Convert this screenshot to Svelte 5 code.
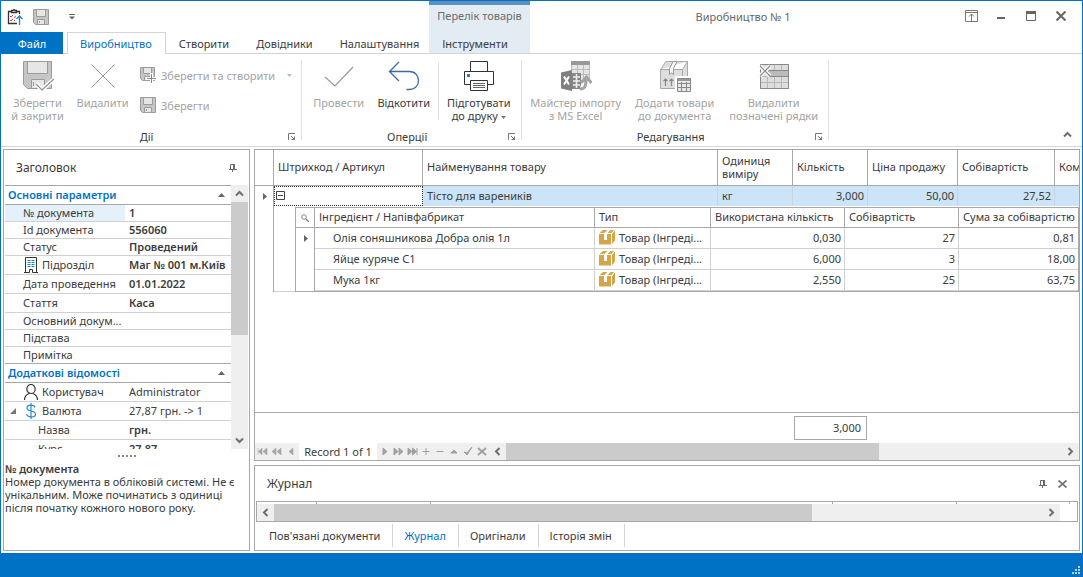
<script>
  const tabs = ['Виробництво', 'Створити', 'Довідники', 'Налаштування'];
  const mainProps = [
    { name: '№ документа', value: '1', selected: true },
    { name: 'Id документа', value: '556060' },
    { name: 'Статус', value: 'Проведений' },
    { name: 'Підрозділ', value: 'Маг № 001 м.Київ', icon: 'building', tall: true },
    { name: 'Дата проведення', value: '01.01.2022', tall: true },
    { name: 'Стаття', value: 'Каса', tall: true },
    { name: 'Основний докум...', value: '' },
    { name: 'Підстава', value: '' },
    { name: 'Примітка', value: '', last: true }
  ];
  const extraProps = [
    { name: 'Користувач', value: 'Administrator', icon: 'user', tall: true, plain: true },
    { name: 'Валюта', value: '27,87 грн. -> 1', icon: 'dollar', tall: true, plain: true, expanded: true },
    { name: 'Назва', value: 'грн.', tall: true, child: true },
    { name: 'Курс', value: '27,87', tall: true, child: true }
  ];
  const ingredients = [
    ['Олія соняшникова Добра олія 1л', '0,030', '27', '0,81'],
    ['Яйце куряче С1', '6,000', '3', '18,00'],
    ['Мука 1кг', '2,550', '25', '63,75']
  ];
  const before = [
    ['Перший', 'M1 2v7M5 2v7L1.500 5.500zM10 2v7L6 5.500z'],
    ['Попередня сторінка', 'M5 2v7L1 5.500zM10 2v7L6 5.500z'],
    ['Попередній', 'M8 2v7L4 5.500z']
  ];
  const after = [
    ['Наступний', 'M5 2v7L9 5.500z'],
    ['Наступна сторінка', 'M2 2v7L6 5.500zM7 2v7L11 5.500z'],
    ['Останній', 'M11 2v7M2 2v7L6 5.500zM6.500 2v7L10.500 5.500z'],
    ['Додати', 'M2.500 5.500h7M6 2v7'],
    ['Вилучити', 'M2.500 5.500h7'],
    ['Редагувати', 'M3 7L6 4L9 7z'],
    ['Прийняти', 'M2 6L5 9L10 1L5 7z'],
    ['Скасувати', 'M2 2l8 7M10 2l-8 7']
  ];
  const bottomTabs = ["Пов'язані документи", 'Журнал', 'Оригінали', 'Історія змін'];
  let activeTab = $state('Виробництво');
  let activeBottom = $state('Журнал');
</script>

{#snippet floppy(size)}
  <svg width={size} height={size} viewBox="0 0 16 16" fill="#c6c6c6" stroke="#9b9b9b">
    <path d="M.5.500h15v15h-13l-2-2z" /><path fill="#e6e6e6" d="M3.500.500h9v7h-9z" /><path fill="#e6e6e6" d="M4.500 10.500h7v5h-7z" /><path d="M6.500 12v2" />
  </svg>
{/snippet}

{#snippet launcher()}
  <button class="launcher" aria-label="Параметри групи">
    <svg width="8" height="8" viewBox="0 0 8 8" fill="none" stroke="#777"><path d="M.5 7V.500H7M3 3l3.500 3.500M3.500 6.500h3v-3" /></svg>
  </button>
{/snippet}

{#snippet chevron(dir)}
  <svg class="chev {dir}" width="9" height="9" viewBox="0 0 9 9" fill="none" stroke="#6f6f6f" stroke-width="2"><path d="M1 6.500L4.500 3L8 6.500" /></svg>
{/snippet}

{#snippet pin()}
  <svg width="8" height="8" viewBox="0 0 8 8" fill="none" stroke="#6a6a6a"><path d="M1.500 5V.500h4V5M0 5.500h8M3.500 6v2" /><path stroke-width="2" d="M5 0v5" /></svg>
{/snippet}

{#snippet propRow(p)}
  <tr class:tall={p.tall} class:last={p.last}>
    <th scope="row" class:selected={p.selected} class:child={p.child}>
      <div class="prop-name">
        {#if p.expanded}
          <svg class="expander" width="6" height="6"><path d="M6 0v6H0z" fill="#777" /></svg>
        {/if}
        {#if p.icon === 'building'}
          <svg width="16" height="16" viewBox="0 0 16 16" fill="none" stroke="#333"><path d="M2.500 15V.500h11V15M1 15.500h5.500v-3h3v3H15" /><path stroke="#1c83cb" stroke-dasharray="3 1" d="M4.500 3.500h7M4.500 5.500h7M4.500 7.500h7M4.500 9.500h7" /></svg>
        {:else if p.icon === 'user'}
          <svg width="16" height="16" viewBox="0 0 16 16" fill="none" stroke="#333" stroke-width="1.200"><ellipse cx="8" cy="5" rx="4.200" ry="4.500" /><path d="M1.500 16c0-4 2-5.500 4.500-6.500M14.500 16c0-4-2-5.500-4.500-6.500" /></svg>
        {:else if p.icon === 'dollar'}
          <svg width="16" height="16" viewBox="0 0 16 16" fill="none" stroke="#2b8acb" stroke-width="1.200"><path d="M12 4.500c-.500-1.500-2-2.300-4-2.300S4 3 4 5s1.500 2.500 4 3 4.500 1.200 4.500 3.200-2 2.700-4.500 2.700-4-1-4.500-2.700M8 0v16" /></svg>
        {/if}
        <span>{p.name}</span>
      </div>
    </th>
    <td class:plain={p.plain}>{p.value}</td>
  </tr>
{/snippet}

{#snippet category(title)}
  <tr class="category">
    <th colspan="2" scope="colgroup">
      <div><span>{title}</span><svg width="7" height="4"><path d="M0 4L3.500 0L7 4z" fill="#666" /></svg></div>
    </th>
  </tr>
{/snippet}

<div class="window">
  <header>
    <div class="quick">
      <svg width="16" height="16" viewBox="0 0 16 16" fill="none" stroke="#333"><path stroke-width="1.300" d="M4 2.500H1.500v12H10M10 2.500h2.500V5M4.500 1.500h1.500L7 .500l1 1h1.500v2h-5z" /><path stroke="#e0443e" d="M3 7l1 1 2-2M3 11l1 1 2-2M7 8.500l2-1M7 11.500h1" /><path stroke="#1c83cb" stroke-width="1.300" d="M12.500 16V7M9.500 10l3-3 3 3" /></svg>
      <button disabled aria-label="Зберегти документ">{@render floppy(16)}</button>
      <button class="more" aria-label="Налаштувати панель"><svg width="6" height="6" fill="#666"><path d="M0 0h6v1H0zM0 2.500h6L3 5.500z" /></svg></button>
    </div>
    <nav class="tabs">
      <button class="file">Файл</button>
      {#each tabs as t}
        <button class="tab" class:active={t === activeTab} onclick={() => (activeTab = t)}>{t}</button>
      {/each}
    </nav>
    <div class="context">
      <span>Перелік товарів</span>
      <button onclick={() => (activeTab = 'Інструменти')}>Інструменти</button>
    </div>
    <div class="caption">
      <h1>Виробництво № 1</h1>
      <div class="controls">
        <button aria-label="Параметри стрічки"><svg width="13" height="12" viewBox="0 0 13 12" fill="none" stroke="#777"><path d="M.5.500h12v11H.500zM0 2.500h13M6.500 11V4M4 6.500L6.500 4L9 6.500" /></svg></button>
        <button aria-label="Згорнути"><svg width="12" height="12"><path d="M2 7h8v2H2z" fill="#666" /></svg></button>
        <button aria-label="Розгорнути"><svg width="10" height="10" fill="none" stroke="#666"><path d="M.5.500h9v9H.500z" /><path d="M0 1.500h10" stroke-width="3" /></svg></button>
        <button aria-label="Закрити"><svg width="10" height="10" stroke="#6a6a6a" stroke-width="2.200"><path d="M.5.500l9 9M9.500.500l-9 9" /></svg></button>
      </div>
    </div>
  </header>

  <section class="ribbon">
    <div class="group">
      <div class="items">
        <button class="big" disabled>
          <svg width="32" height="32" viewBox="0 0 32 32" fill="#c6c6c6" stroke="#9b9b9b"><path d="M1.500 1.500h28v27h-24l-4-4z" /><path fill="#e6e6e6" d="M5.500 1.500h20v12h-20z" /><path fill="#e6e6e6" d="M9.500 19.500h13v9h-13z" /><path d="M11.500 22v4" /><path stroke="#fff" stroke-width="4" fill="none" d="M14 24l6 6L32 19" /><path stroke="#8f8f8f" stroke-width="1.200" fill="none" d="M14 24l6 6L32 19" /></svg>
          <span>Зберегти<br />й закрити</span>
        </button>
        <button class="big" disabled>
          <svg width="32" height="32" fill="none" stroke="#999"><path d="M4.500 4.500l23 23M27.500 4.500l-23 23" /></svg>
          <span>Видалити</span>
        </button>
        <div class="small-stack">
          <button disabled>
            <svg width="16" height="16" viewBox="0 0 16 16" fill="#c6c6c6" stroke="#9b9b9b"><path d="M.5.500h14v13h-12l-2-2z" /><path fill="#e6e6e6" d="M3.500.500h8v6h-8zM4.500 9.500h5v4h-5z" /><path stroke="#fff" stroke-width="3" d="M11.500 6v10M6 11.500h10" /><path stroke="#888" d="M11.500 7v9M7 11.500h9" /></svg>
            <span>Зберегти та створити</span>
            <svg class="drop" width="5" height="3"><path d="M0 0h5L2.500 3z" fill="#bbb" /></svg>
          </button>
          <button disabled>{@render floppy(16)}<span>Зберегти</span></button>
        </div>
      </div>
      <div class="group-title"><span>Дії</span>{@render launcher()}</div>
    </div>

    <div class="group">
      <div class="items">
        <button class="big" disabled>
          <svg width="32" height="32" fill="none" stroke="#999" stroke-width="1.200"><path d="M2 17l10 9L30 7" /></svg>
          <span>Провести</span>
        </button>
        <button class="big">
          <svg width="32" height="32" fill="none" stroke="#3a6ca3" stroke-width="1.300"><path d="M11 2L1.500 11.500L11 21M1.500 11.500h20c12 0 12 18 0 18h-3" /></svg>
          <span>Відкотити</span>
        </button>
        <i class="rule"></i>
        <button class="big wide">
          <svg width="32" height="32" fill="#fff" stroke="#333"><path d="M7.500 1.500h17v10h-17zM1.500 11.500h29v13h-29z" /><path d="M7.500 20.500h17v10h-17z" /><path stroke="#666" d="M10 23.500h12M10 25.500h12M10 27.500h12" /><path stroke="none" fill="#1c83cb" d="M4 14h3v3H4z" /></svg>
          <span>Підготувати<br />до друку <svg class="drop-inline" width="5" height="3"><path d="M0 0h5L2.500 3z" fill="#777" /></svg></span>
        </button>
      </div>
      <div class="group-title"><span>Оперції</span>{@render launcher()}</div>
    </div>

    <div class="group">
      <div class="items">
        <button class="big xwide" disabled>
          <svg width="32" height="32"><path fill="#e6e6e6" stroke="#bbb" d="M11.500 2.500h18v18h-18z" /><path fill="#999" d="M11 1h19v4H11z" /><path stroke="#bbb" d="M12 9.500h18M12 14.500h18M17.500 5v15M23.500 5v15" /><path fill="#888" d="M12 13h9v16h-9z" /><path stroke="#eee" stroke-width="1.500" d="M13 17h7M13 21h7M13 25h7M16.500 14v14" /><path fill="#808080" d="M1 12.500L12 10v21L1 28.500z" /><path stroke="#fff" stroke-width="2" d="M4 16.500l5 8M9 16.500l-5 8" /><path fill="none" stroke="#fff" stroke-width="5" d="M20 29c5 0 7-3 7-10" /><path fill="none" stroke="#a3a3a3" stroke-width="3" d="M20 29c5 0 6-3 6-10M21 23l5.500-6 5 6" /></svg>
          <span>Майстер імпорту<br />з MS Excel</span>
        </button>
        <button class="big xwide" disabled>
          <svg width="32" height="32" fill="#dedede" stroke="#aaa"><path d="M1.500 9.500L7 1.500h21.500v19l-5 8h-22zM1.500 9.500h22l5-8M23.500 9.500v19" /><path fill="#f4f4f4" stroke="#999" d="M14 1.500l-3.500 7v6l2-1.500 2 1.500v-6l3.500-7z" /><path stroke="#888" fill="none" stroke-width="1.200" d="M6.500 26v-7M4.500 21l2-2 2 2M12.500 26v-7M10.500 21l2-2 2 2" /><path stroke="none" fill="#fff" d="M16 16h16v16H16z" /><path fill="#e8e8e8" stroke="#888" d="M18.500 18.500h13v13h-13zM19 23.500h12M19 27.500h12M22.500 22v9M27.500 22v9" /><path stroke-width="2" stroke="#999" d="M19 20h12" /></svg>
          <span>Додати товари<br />до документа</span>
        </button>
        <button class="big xwide" disabled>
          <svg width="32" height="32" fill="#dedede" stroke="#b8b8b8"><path d="M2.500 4.500h28v24h-28zM3 16.500h28M3 22.500h28M9.500 5v23M16.500 5v23M23.500 5v23" /><path stroke="#888" fill="none" d="M2.500 4.500h28v24h-28z" /><path fill="#bbb" stroke="#888" d="M10.500 10.500h20v6h-20z" /><path stroke="#fff" stroke-width="4" d="M2 6l10 10M12 6L2 16" /><path stroke="#888" stroke-width="1.200" d="M2 6l10 10M12 6L2 16" /></svg>
          <span>Видалити<br />позначені рядки</span>
        </button>
      </div>
      <div class="group-title"><span>Редагування</span>{@render launcher()}</div>
    </div>
    <button class="collapse" aria-label="Згорнути стрічку">{@render chevron('up')}</button>
  </section>

  <main>
    <aside class="panel side">
      <div class="panel-head"><h2>Заголовок</h2><button aria-label="Закріпити">{@render pin()}</button></div>
      <div class="props">
        <div class="props-view">
          <table>
            <colgroup><col class="c-name" /><col /></colgroup>
            <tbody>
              {@render category('Основні параметри')}
              {#each mainProps as p}{@render propRow(p)}{/each}
              {@render category('Додаткові відомості')}
              {#each extraProps as p}{@render propRow(p)}{/each}
            </tbody>
          </table>
        </div>
        <div class="vscroll">
          <button aria-label="Вгору">{@render chevron('up')}</button>
          <div class="track"><div class="thumb"></div></div>
          <button aria-label="Вниз">{@render chevron('down')}</button>
        </div>
      </div>
      <div class="splitter"><i></i><i></i><i></i><i></i><i></i></div>
      <div class="hint">
        <strong>№ документа</strong>
        <p>Номер документа в обліковій системі. Не є унікальним. Може починатись з одиниці після початку кожного нового року.</p>
      </div>
    </aside>

    <div class="work">
      <section class="panel grid">
        <div class="grid-body">
          <table class="master">
            <colgroup><col class="w19" /><col class="w149" /><col /><col class="w75" /><col class="w75" /><col class="w90" /><col class="w97" /><col class="w24" /></colgroup>
            <thead>
              <tr><th></th><th>Штрихкод / Артикул</th><th>Найменування товару</th><th>Одиниця виміру</th><th>Кількість</th><th>Ціна продажу</th><th>Собівартість</th><th class="cut">Ком</th></tr>
            </thead>
            <tbody>
              <tr class="current">
                <td class="ind"><svg width="5" height="7"><path d="M1 0v7L5 3.500z" fill="#666" /></svg></td>
                <td class="focus"><button aria-label="Згорнути рядок"><svg width="9" height="9" fill="none" stroke="#444"><path d="M.5.500h8v8h-8zM2 4.500h5" /></svg></button></td>
                <td>Тісто для вареників</td><td>кг</td><td class="num">3,000</td><td class="num">50,00</td><td class="num">27,52</td><td></td>
              </tr>
              <tr>
                <td class="ind"></td>
                <td colspan="7" class="nest">
                  <table class="detail">
                    <colgroup><col class="w19" /><col /><col class="w116" /><col class="w134" /><col class="w114" /><col class="w119" /></colgroup>
                    <thead>
                      <tr>
                        <th class="ind"><svg width="8" height="8" fill="none" stroke="#888"><circle cx="3" cy="3" r="2.300" /><path d="M5 5l3 3" stroke-width="1.500" /></svg></th>
                        <th>Інгредієнт / Напівфабрикат</th><th>Тип</th><th>Використана кількість</th><th>Собівартість</th><th>Сума за собівартістю</th>
                      </tr>
                    </thead>
                    <tbody>
                      {#each ingredients as [name, qty, cost, sum], i}
                        <tr>
                          <td class="ind">{#if i === 0}<svg width="5" height="7"><path d="M1 0v7L5 3.500z" fill="#666" /></svg>{/if}</td>
                          <td class="ingredient">{name}</td>
                          <td>
                            <div class="type">
                              <svg width="16" height="16"><path fill="#d7a549" d="M0 5h5v6h3V5h4v10.500H0zM13 5l3-3.500v10L13 15zM.5 4L4 1h4.500L5.500 4zM8.500 4l3-3H15l-2.500 3z" /></svg>
                              <span>Товар (Інгреді...</span>
                            </div>
                          </td>
                          <td class="num">{qty}</td><td class="num">{cost}</td><td class="num">{sum}</td>
                        </tr>
                      {/each}
                    </tbody>
                  </table>
                </td>
              </tr>
            </tbody>
          </table>
        </div>
        <div class="summary"><output>3,000</output></div>
        <div class="navigator">
          <div class="nav-buttons first">
            {#each before as [label, d]}
              <button aria-label={label}><svg width="12" height="11"><path {d} fill="#a6a6a6" stroke="#a6a6a6" stroke-width=".600" /></svg></button>
            {/each}
          </div>
          <span class="record">Record 1 of 1</span>
          <div class="nav-buttons">
            {#each after as [label, d], i}
              <button aria-label={label}><svg width="12" height="11"><path {d} fill={i === 7 ? 'none' : '#a0a0a0'} stroke="#a0a0a0" stroke-width={i === 7 ? 2 : 1} /></svg></button>
            {/each}
          </div>
          <div class="hscroll">
            <button aria-label="Ліворуч">{@render chevron('left')}</button>
            <div class="track"><div class="thumb"></div></div>
            <button aria-label="Праворуч">{@render chevron('right')}</button>
          </div>
        </div>
      </section>

      <section class="panel journal">
        <div class="panel-head">
          <h2>Журнал</h2>
          <button aria-label="Закріпити журнал">{@render pin()}</button>
          <button aria-label="Закрити журнал"><svg width="9" height="8" stroke="#777" stroke-width="1.800"><path d="M.5.500l8 7M8.500.500l-8 7" /></svg></button>
        </div>
        <div class="journal-box">
          <div class="ticks"><i></i><i></i><i></i><i></i><i></i><i></i></div>
          <div class="hscroll">
            <button aria-label="Журнал ліворуч">{@render chevron('left')}</button>
            <div class="track"><div class="thumb wide-thumb"></div></div>
            <button aria-label="Журнал праворуч">{@render chevron('right')}</button>
          </div>
        </div>
        <nav class="bottom-tabs">
          {#each bottomTabs as t}
            <button class:active={t === activeBottom} onclick={() => (activeBottom = t)}>{t}</button>
          {/each}
        </nav>
      </section>
    </div>
  </main>

  <footer>
    <svg width="8" height="8" fill="#b9cfe6"><path d="M6 0h2v2H6zM3 3h2v2H3zM6 3h2v2H6zM0 6h2v2H0zM3 6h2v2H3zM6 6h2v2H6z" /></svg>
  </footer>
</div>

<style>
  :global(body) { margin: 0; }
  * { box-sizing: border-box; }
  .window {
    display: flex; flex-direction: column; height: 100vh; overflow: hidden;
    border: 1px solid #0072c6; border-bottom: 0; background: #fff;
    font: 11px/13px "Noto Sans", "Open Sans", sans-serif; color: #3b3b3b;
  }
  svg { display: block; flex: none; }
  button { margin: 0; padding: 0; border: 0; background: none; font: inherit; color: inherit; white-space: nowrap; }
  h1, h2, p { margin: 0; font-weight: 400; }
  table { width: 100%; table-layout: fixed; border-collapse: separate; border-spacing: 0; }
  th, td { padding: 0; font-weight: 400; text-align: left; }

  header { display: grid; grid-template: 31px 22px / 428px 101px 1fr; flex: none; background: linear-gradient(#d4d4d4, #d4d4d4) bottom / 100% 1px no-repeat; }
  .quick { display: flex; align-items: center; gap: 10px; padding-left: 6px; }
  .quick .more { margin-left: 10px; }
  .tabs { display: flex; grid-row: 2; grid-column: 1; }
  .tabs button { flex: none; }
  .file { width: 62px; margin-right: 4px; background: #0072c6; color: #fff; }
  .tab { padding: 0 13px 0 12px; border: 1px solid transparent; border-bottom: 0; }
  .tab.active { border-color: #d4d4d4; background: #fff; color: #0072c6; }
  .context { grid-column: 2; grid-row: 1 / 3; display: flex; flex-direction: column; justify-content: space-between; margin-bottom: 1px; padding: 4px 0 3px; border-top: 4px solid #5b8fc0; background: #e3ebf3; color: #6b6b6b; text-align: center; white-space: nowrap; }
  .context button { padding-right: 9px; color: #3b3b3b; }
  .caption { grid-column: 3; grid-row: 1; display: flex; align-items: center; color: #666; }
  .caption h1 { flex: 1; padding-bottom: 1px; font-size: 11px; text-align: center; }
  .controls { display: flex; padding-right: 6px; padding-bottom: 1px; }
  .controls button { display: grid; place-items: center; width: 30px; height: 24px; }

  .ribbon { display: flex; flex: none; height: 93px; border-bottom: 1px solid #d4d4d4; }
  .group { display: flex; flex-direction: column; justify-content: space-between; padding: 6px 6px 3px 4px; background: linear-gradient(#e0e0e0, #e0e0e0) right 6px / 1px 80px no-repeat; }
  .items { display: flex; }
  .big { display: flex; flex-direction: column; align-items: center; gap: 4px; width: 65px; line-height: 13px; text-align: center; }
  .big.wide { width: 75px; }
  .big.xwide { width: 99px; }
  .ribbon button:disabled { color: #a3a3a3; }
  .small-stack { display: flex; flex-direction: column; gap: 14px; padding: 7px 4px 0 5px; }
  .small-stack button { display: flex; align-items: center; gap: 5px; height: 16px; }
  .drop { margin-left: 7px; }
  .drop-inline { display: inline-block; vertical-align: middle; }
  .rule { width: 1px; height: 58px; margin: 2px 2px 0; background: #e0e0e0; }
  .group-title { display: flex; align-items: center; height: 13px; }
  .group-title span { flex: 1; text-align: center; }
  .launcher { flex: none; }
  .collapse { margin: auto 10px 7px auto; }
  .chev.down { transform: rotate(180deg); }
  .chev.left { transform: rotate(-90deg); }
  .chev.right { transform: rotate(90deg); }

  main { flex: 1; min-height: 0; display: grid; grid-template-columns: 247px minmax(0, 1fr); gap: 4px; padding: 2px; }
  .panel { border: 1px solid #a8a8a8; background: #fff; min-width: 0; }
  .panel-head { display: flex; align-items: center; gap: 11px; height: 35px; padding: 0 11px; flex: none; }
  .panel-head h2 { flex: 1; font-size: 12px; }

  .side { display: flex; flex-direction: column; min-height: 0; padding: 0 1px; }
  .props { flex: 1; min-height: 0; display: flex; }
  .props-view { flex: 1; overflow: hidden; border-top: 1px solid #a8a8a8; }
  .c-name { width: 120px; }
  .props tr { height: 17px; }
  .props tr.tall, .props tr.category { height: 19px; }
  .props th, .props td { border-bottom: 1px solid #d0d0d0; line-height: 16px; white-space: nowrap; overflow: hidden; }
  .props th { padding-left: 18px; }
  .props th.child { padding-left: 33px; }
  .props td { padding-left: 4px; font-weight: 600; }
  .props td.plain { font-weight: 400; }
  .props th.selected { background: #e4f0fa; }
  .props tr.last th, .props tr.last td { border-color: #a8a8a8; }
  .props .category th { padding: 0 6px 0 3px; border-color: #a8a8a8; color: #0072c6; font-weight: 600; }
  .category div { display: flex; align-items: center; justify-content: space-between; }
  .prop-name { position: relative; display: flex; align-items: center; gap: 3px; height: 16px; }
  .expander { position: absolute; left: -13px; top: 5px; }
  .vscroll { display: flex; flex-direction: column; width: 17px; background: #efefef; }
  .vscroll button, .hscroll button { display: grid; place-items: center; width: 17px; height: 17px; flex: none; }
  .track { flex: 1; }
  .thumb { background: #cbcbcb; }
  .vscroll .thumb { height: 58%; }
  .splitter { display: flex; justify-content: center; align-items: center; gap: 2px; height: 13px; flex: none; }
  .splitter i { width: 2px; height: 2px; background: #888; }
  .hint { height: 88px; flex: none; }
  .hint strong { font-weight: 600; }

  .work { display: flex; flex-direction: column; gap: 4px; min-width: 0; min-height: 0; }
  .grid { flex: 1; min-height: 0; display: flex; flex-direction: column; }
  .grid-body { flex: 1; min-height: 0; overflow: hidden; }
  .w19 { width: 19px; } .w24 { width: 24px; } .w75 { width: 75px; } .w90 { width: 90px; } .w97 { width: 97px; }
  .w114 { width: 114px; } .w116 { width: 116px; } .w119 { width: 119px; } .w134 { width: 134px; } .w149 { width: 149px; }
  .master th { height: 36px; padding: 0 4px 2px; border: solid #a8a8a8; border-width: 0 1px 1px 0; overflow: hidden; }
  .master th:last-child { border-right: 0; }
  .master .cut, .detail th { white-space: nowrap; }
  .master .cut { padding-right: 0; }
  .master td { height: 20px; padding: 0 4px 2px; }
  .master .current td { border-right: 1px solid #ccd2d8; background: #cce4f7; }
  .master .current td:last-child { border-right: 0; }
  .master .current td.focus { border-right: 0; background: #fff; outline: 1px dotted #333; outline-offset: -1px; padding: 0 2px 1px; }
  .focus button { display: block; }
  .master td.num { padding: 0 3px 2px; text-align: right; }
  .master td.ind, .master .current td.ind, .detail th.ind { padding: 0; border-right: 1px solid #a8a8a8; background: #fff; }
  .ind svg { margin: 0 auto; }
  .master td.nest { padding: 1px 0 0 21px; background: linear-gradient(#d0d0d0, #d0d0d0) bottom / 100% 1px no-repeat; }
  .detail { border: 1px solid #a8a8a8; }
  .detail th { height: 20px; padding-bottom: 2px; }
  .detail td { height: 21px; border: solid #d0d0d0; border-width: 0 1px 1px 0; }
  .detail td:last-child { border-right: 0; }
  .detail td.ind { border-bottom: 0; }
  .detail td.ingredient { padding-left: 18px; }
  .type { display: flex; gap: 4px; align-items: center; white-space: nowrap; }
  .summary { display: flex; justify-content: flex-end; flex: none; height: 31px; padding: 3px 212px 3px 0; border-top: 1px solid #a8a8a8; }
  .summary output { width: 73px; height: 24px; padding: 4px 5px; border: 1px solid #a8a8a8; text-align: right; }
  .navigator { display: flex; height: 17px; flex: none; background: #efefef; }
  .nav-buttons { display: flex; }
  .nav-buttons button { display: grid; place-items: center; width: 14px; height: 17px; }
  .nav-buttons.first { padding: 0 1px; }
  .record { width: 78px; padding: 2px 0; background: #fff; text-align: center; white-space: nowrap; }
  .hscroll { flex: 1; display: flex; height: 17px; background: #efefef; }
  .hscroll .thumb { height: 100%; width: 67%; }
  .hscroll .wide-thumb { width: 70%; }

  .journal { flex: none; display: flex; flex-direction: column; height: 86px; padding: 0 1px; }
  .journal-box { border: 1px solid #a8a8a8; }
  .journal-box .hscroll { margin-right: 17px; }
  .ticks { display: grid; grid-template-columns: 60px 114px 1fr 124px 113px 7px; height: 2px; }
  .ticks i { border-right: 1px solid #a8a8a8; }
  .ticks i:last-child { border: 0; }
  .bottom-tabs { display: flex; flex: 1; padding: 2px 0 3px 2px; }
  .bottom-tabs button { padding: 0 12px 0 11px; border-right: 1px solid #d4d4d4; }
  .bottom-tabs .active { color: #0072c6; }

  footer { display: flex; align-items: flex-end; justify-content: flex-end; flex: none; height: 24px; padding: 3px 2px; background: #0072c6; }
</style>
